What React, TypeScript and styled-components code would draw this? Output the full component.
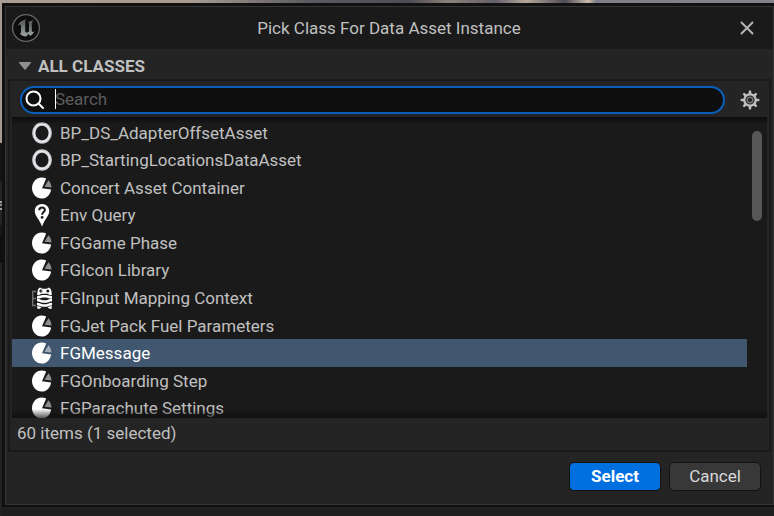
import React from "react";
import styled, { createGlobalStyle, css } from "styled-components";

const GlobalStyle = createGlobalStyle`
  * { box-sizing: border-box; }
  html, body, #root { height: 100%; margin: 0; }
  body {
    overflow: hidden;
    background: #202020;
    color: #c0c0c0;
    font: 17px/20px Roboto, "Liberation Sans", sans-serif;
  }
  button, input { font: inherit; color: inherit; }
`;

const Desktop = styled.div`
  min-height: 100%;
  display: flex;
  padding: 3px 0 9px 2px;
  background:
    linear-gradient(90deg, #a99d94 0, #a69a91 25%, #5c5a60 40%, #4f4c54 53%, #8b8179 58%, #64606a 64%, #b5a79a 68%, #4f4c56 73%, #c9baa8 76%, #817d8a 77%, #85818f 100%) top / 100% 3px no-repeat,
    linear-gradient(#a69a91 0 143px, #141414 143px 181px, #242424 181px 201px, #a0a0a0 201px 203px, #303030 203px 204px, #909090 204px 206px, #242424 206px 208px, #a0a0a0 208px 210px, #242424 210px 225px, #181818 225px 236px, #0f0f0f 236px 263px, #222222 263px) left / 2px 100% no-repeat,
    #1f1f1f;
`;

const Dialog = styled.section`
  flex: 1;
  min-width: 0;
  display: flex;
  flex-direction: column;
  border: solid #101010;
  border-width: 3px 0 2px 3px;
  background: #242424;
`;

const Frame = styled.div`
  flex: 1;
  display: flex;
  flex-direction: column;
  border: 1px solid #343434;
`;

const TitleBar = styled.header`
  display: grid;
  grid-template-columns: 40px 1fr 40px;
  align-items: center;
  height: 42px;
  padding: 0 6px 0 5px;
  background: #1a1a1a;
`;

const Title = styled.h1`
  margin: 0;
  font-size: 17px;
  font-weight: 400;
  text-align: center;
`;

const IconButton = styled.button`
  display: flex;
  align-items: center;
  justify-content: center;
  padding: 0;
  border: 0;
  background: none;
`;

const SectionHeader = styled.button`
  display: flex;
  align-items: center;
  gap: 6px;
  height: 30px;
  padding: 3px 12px 0;
  border: 0;
  background: none;
  font-weight: 700;
  text-align: left;
`;

const Panel = styled.div`
  display: flex;
  flex-direction: column;
  margin: 0 2px;
  border: 2px solid #1a1a1a;
`;

const SearchRow = styled.div`
  display: flex;
  align-items: center;
  gap: 15px;
  padding: 5px 9px 3px 10px;
`;

const SearchBox = styled.label`
  position: relative;
  flex: 1;
  display: flex;
  align-items: center;
  gap: 10px;
  height: 28px;
  padding: 0 12px 0 3px;
  border: 2px solid #0a5fbc;
  border-radius: 14px;
  background: #0f0f0f;
`;

const SearchInput = styled.input`
  flex: 1;
  min-width: 0;
  height: 20px;
  padding: 0 0 2px;
  border: 0;
  outline: 0;
  background: none;
  &::placeholder { color: #5c5c5c; opacity: 1; }
`;

const Caret = styled.span`
  position: absolute;
  left: 33px;
  top: 1px;
  width: 1px;
  height: 20px;
  background: #ffffff;
`;

const ListView = styled.div`
  position: relative;
  display: flex;
  height: 301px;
  margin: 0 2px;
  padding-top: 2px;
  overflow: hidden;
  background: #1a1a1a;
  &::after {
    content: "";
    position: absolute;
    inset: 0;
    pointer-events: none;
    background:
      linear-gradient(#0c0c0c, transparent) top / 100% 7px no-repeat,
      linear-gradient(transparent, #0c0c0cb0) bottom / 100% 9px no-repeat;
  }
`;

const ClassList = styled.ul`
  flex: 1;
  display: grid;
  grid-auto-rows: 1fr;
  height: 303px;
  margin: 0;
  padding: 0;
  list-style: none;
`;

const ClassRow = styled.li<{ $selected: boolean }>`
  display: flex;
  align-items: center;
  gap: 8px;
  padding-left: 20px;
  ${(p) => p.$selected && css`
    background: #40576f;
    color: #ffffff;
  `}
`;

const ScrollTrack = styled.div`
  width: 20px;
  padding: 12px 5px 0;
`;

const ScrollThumb = styled.div`
  height: 90px;
  border-radius: 5px;
  background: #575757;
`;

const Status = styled.div`
  height: 32px;
  padding: 5px 7px 0;
`;

const Footer = styled.footer`
  display: flex;
  justify-content: flex-end;
  gap: 8px;
  padding: 10px 12px 0;
`;

const ActionButton = styled.button<{ $primary?: boolean }>`
  width: 92px;
  height: 29px;
  padding: 0 0 2px;
  border: 1px solid #121212;
  border-radius: 5px;
  background: ${(p) => (p.$primary ? "#0070e0" : "#383838")};
  color: ${(p) => (p.$primary ? "#ffffff" : "#d8d8d8")};
  font-weight: ${(p) => (p.$primary ? 700 : 400)};
`;

const Logo = () => (
  <svg width="30" height="30" viewBox="0 0 30 30" aria-hidden="true">
    <defs>
      <linearGradient id="metal" x1="0" y1="0" x2="0" y2="1">
        <stop offset="0" stopColor="#505454" />
        <stop offset="1" stopColor="#a0a5a5" />
      </linearGradient>
    </defs>
    <circle cx="15" cy="15" r="13.4" fill="#0d0d0d" stroke="#686868" strokeWidth="1.3" />
    <path
      fill="url(#metal)"
      d="M14 6.6C10.6 7.5 7.8 9.8 6.8 13.2c1-1.2 2-1.8 2.6-1.5.5.2.6.7.6 1.4v6.1c0 .9-.5 1.2-1.3 1 1.6 2.2 3.9 3.2 6.5 3.2l2.2-2.3 1.8 1.7c2.1-1.2 3.5-2.9 4.3-4.9-.9.8-1.7 1.2-2.2.9-.4-.2-.5-.6-.5-1.1v-7c0-1.4.9-2.7 2.1-3.7-2.3.4-4.4 1.3-6.2 2.6h.6c.6.2.8.7.8 1.4v7.3c-.7.8-1.5 1.2-2.3 1.2-1.1 0-1.6-.6-1.6-1.8V9.5c0-1.4.5-2.3 1.4-2.9h-1.6z"
    />
  </svg>
);

const CloseIcon = () => (
  <svg width="16" height="16" viewBox="0 0 16 16" stroke="#b4b4b4" strokeWidth="2" strokeLinecap="round" aria-hidden="true">
    <path d="M2.500 2.500L13.500 13.500M13.500 2.500L2.500 13.500" />
  </svg>
);

const Arrow = () => (
  <svg width="14" height="10" viewBox="0 0 14 10" fill="#909090" aria-hidden="true">
    <path d="M1.5 1h11c.6 0 .8.6.4 1L7.6 8.5c-.3.4-.9.4-1.2 0L1.1 2c-.4-.4-.2-1 .4-1z" />
  </svg>
);

const SearchIcon = () => (
  <svg width="20" height="20" viewBox="0 0 20 20" fill="none" stroke="#ffffff" strokeWidth="2" strokeLinecap="round" aria-hidden="true">
    <circle cx="8.5" cy="8.5" r="7" />
    <path d="M13.5 13.5L18 18" />
  </svg>
);

const GearIcon = () => (
  <svg width="20" height="20" viewBox="0 0 20 20" fill="none" stroke="#c0c0c0" aria-hidden="true">
    <circle cx="10" cy="10" r="5.700" strokeWidth="2.200" />
    <circle cx="10" cy="10" r="2.8" stroke="#777777" strokeWidth="1.4" />
    {[0, 45, 90, 135, 180, 225, 270, 315].map((a) => (
      <path key={a} d="M8.400 4.200L9 .6h2l.6 3.600z" fill="#c0c0c0" stroke="none" transform={`rotate(${a} 10 10)`} />
    ))}
  </svg>
);

const RingIcon = () => (
  <svg width="20" height="22" viewBox="0 0 20 22" fill="none" aria-hidden="true">
    <ellipse cx="10" cy="11" rx="8.2" ry="9" stroke="#c9c9ce" strokeWidth="3.4" />
    <ellipse cx="10" cy="11" rx="8" ry="8.8" stroke="#e8e8ee" strokeWidth="1.4" />
  </svg>
);

const PieIcon = () => (
  <svg width="20" height="22" viewBox="0 0 20 22" aria-hidden="true">
    <path fill="#ffffff" d="M14.200 1.500L10 11.200l9.100 1.200C18.500 17.500 14.700 21.500 9.700 21.500 4.300 21.500 0 16.800 0 11S4.300.5 9.700.5c1.600 0 3.200.4 4.500 1z" />
    <path fill="#ffffff" fillOpacity=".5" d="M16.400 3.200c1.800 1.700 3 4.400 3.100 7.400l-7-.8z" />
  </svg>
);

const QueryIcon = () => (
  <svg width="20" height="24" viewBox="0 0 20 24" aria-hidden="true">
    <path fill="#ffffff" d="M10 1c4.200 0 7.200 3.100 7.200 7.200 0 4.100-3.700 7.200-5.700 11.800L10 23.500 8.500 20C6.500 15.400 2.800 12.300 2.800 8.200 2.800 4.100 5.800 1 10 1z" />
    <path fill="none" stroke="#1a1a1a" strokeWidth="2" d="M7.300 7.200c0-3.600 5.600-3.500 5.600-.2 0 2.100-2.800 2.100-2.800 4.800" />
    <circle cx="10.100" cy="14.400" r="1.400" fill="#1a1a1a" />
  </svg>
);

const InputIcon = () => (
  <svg width="20" height="22" viewBox="0 0 20 22" aria-hidden="true">
    <path fill="none" stroke="#747474" strokeWidth="1.300" d="M4 4.500H.7v14H4M.7 11.500H4" />
    <path fill="#ffffff" d="M7.500.8c1.200-.5 2.200.5 2.800 1h4.400c.6-.5 1.600-1.500 2.800-1C19.300 2 20 5.500 19.700 8c-1 .7-2.600 0-4.200-1.200h-6C7.900 8 6.200 8.700 5.300 8 5 5.500 5.700 2 7.500.8z" />
    <path stroke="#1a1a1a" strokeWidth="1.200" d="M7 4h3.600M8.800 2.200v3.600" />
    <circle cx="15.800" cy="4" r="1.500" fill="#1a1a1a" />
    <path
      fill="none"
      stroke="#ffffff"
      strokeWidth="2.600"
      d="M5 10.200c3 .4 3.700-.9 5.500-.9h4c1.800 0 2.500 1.300 5.500.9M5 13c3 0 3.700 1.500 5.500 1.500h4c1.800 0 2.500-1.500 5.500-1.500M5 17c3 0 3.700 1.500 5.500 1.500h4c1.800 0 2.500-1.500 5.500-1.500"
    />
    <path fill="#ffffff" d="M5.300 18.800l4.200 1.400-1.800 1.500H5.300zM19.700 18.800l-4.200 1.400 1.800 1.500h2.400z" />
  </svg>
);

const icons = { ring: RingIcon, pie: PieIcon, query: QueryIcon, input: InputIcon };

const classes: { name: string; icon: keyof typeof icons }[] = [
  { name: "BP_DS_AdapterOffsetAsset", icon: "ring" },
  { name: "BP_StartingLocationsDataAsset", icon: "ring" },
  { name: "Concert Asset Container", icon: "pie" },
  { name: "Env Query", icon: "query" },
  { name: "FGGame Phase", icon: "pie" },
  { name: "FGIcon Library", icon: "pie" },
  { name: "FGInput Mapping Context", icon: "input" },
  { name: "FGJet Pack Fuel Parameters", icon: "pie" },
  { name: "FGMessage", icon: "pie" },
  { name: "FGOnboarding Step", icon: "pie" },
  { name: "FGParachute Settings", icon: "pie" },
];

export default function App() {
  const [selected, setSelected] = React.useState("FGMessage");
  return (
    <>
      <GlobalStyle />
      <Desktop>
        <Dialog role="dialog" aria-labelledby="dialog-title">
          <Frame>
            <TitleBar>
              <Logo />
              <Title id="dialog-title">Pick Class For Data Asset Instance</Title>
              <IconButton aria-label="Close"><CloseIcon /></IconButton>
            </TitleBar>
            <SectionHeader aria-expanded="true"><Arrow />ALL CLASSES</SectionHeader>
            <Panel>
              <SearchRow>
                <SearchBox>
                  <SearchIcon />
                  <SearchInput type="text" placeholder="Search" aria-label="Search" />
                  <Caret />
                </SearchBox>
                <IconButton aria-label="Settings"><GearIcon /></IconButton>
              </SearchRow>
              <ListView>
                <ClassList role="listbox" aria-label="Classes">
                  {classes.map(({ name, icon }) => {
                    const Icon = icons[icon];
                    return (
                      <ClassRow
                        key={name}
                        role="option"
                        aria-selected={name === selected}
                        $selected={name === selected}
                        onClick={() => setSelected(name)}
                      >
                        <Icon />
                        {name}
                      </ClassRow>
                    );
                  })}
                </ClassList>
                <ScrollTrack><ScrollThumb /></ScrollTrack>
              </ListView>
              <Status>60 items (1 selected)</Status>
            </Panel>
            <Footer>
              <ActionButton $primary>Select</ActionButton>
              <ActionButton>Cancel</ActionButton>
            </Footer>
          </Frame>
        </Dialog>
      </Desktop>
    </>
  );
}
